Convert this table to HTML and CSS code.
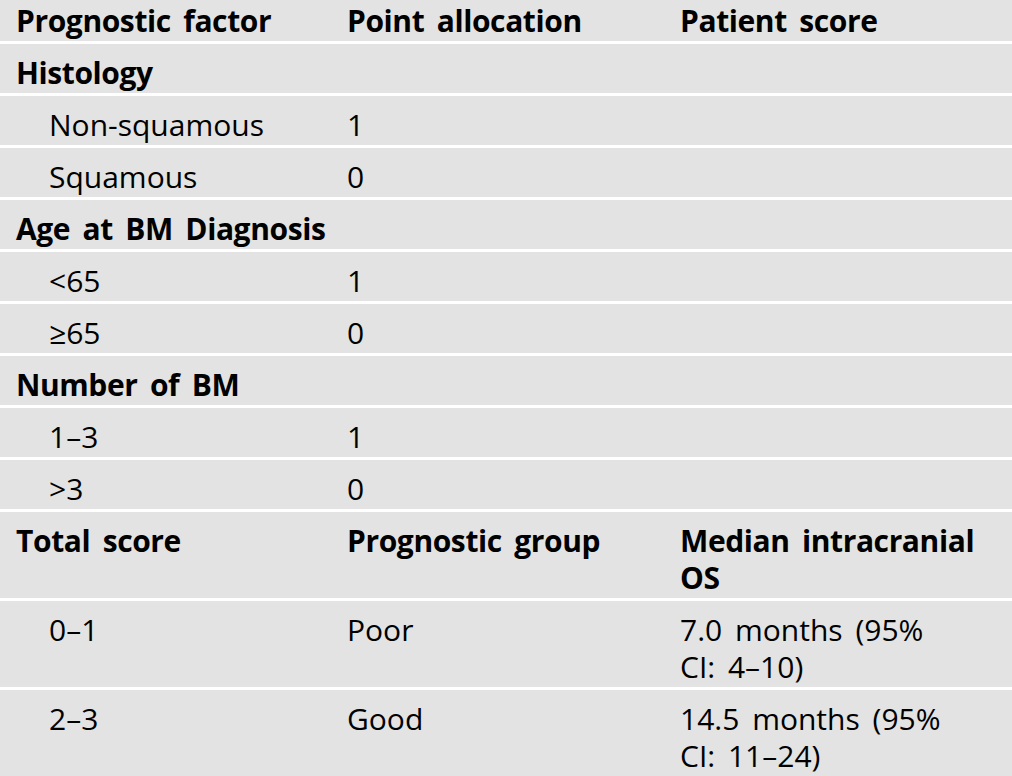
FILE: index.html
```html
<!DOCTYPE html>
<html lang="en">
<head>
<meta charset="utf-8">
<title>Prognostic score</title>
<link rel="stylesheet" href="styles.css">
</head>
<body>
<div class="table">
  <div class="row head">
    <div class="cell">Prognostic factor</div>
    <div class="cell">Point allocation</div>
    <div class="cell">Patient score</div>
  </div>
  <div class="row group">
    <div class="cell">Histology</div>
    <div class="cell"></div>
    <div class="cell"></div>
  </div>
  <div class="row">
    <div class="cell indent">Non-squamous</div>
    <div class="cell">1</div>
    <div class="cell"></div>
  </div>
  <div class="row">
    <div class="cell indent">Squamous</div>
    <div class="cell">0</div>
    <div class="cell"></div>
  </div>
  <div class="row group">
    <div class="cell">Age at BM Diagnosis</div>
    <div class="cell"></div>
    <div class="cell"></div>
  </div>
  <div class="row">
    <div class="cell indent">&lt;65</div>
    <div class="cell">1</div>
    <div class="cell"></div>
  </div>
  <div class="row">
    <div class="cell indent">≥65</div>
    <div class="cell">0</div>
    <div class="cell"></div>
  </div>
  <div class="row group">
    <div class="cell">Number of BM</div>
    <div class="cell"></div>
    <div class="cell"></div>
  </div>
  <div class="row">
    <div class="cell indent">1–3</div>
    <div class="cell">1</div>
    <div class="cell"></div>
  </div>
  <div class="row">
    <div class="cell indent">&gt;3</div>
    <div class="cell">0</div>
    <div class="cell"></div>
  </div>
  <div class="row group">
    <div class="cell">Total score</div>
    <div class="cell">Prognostic group</div>
    <div class="cell">Median intracranial<br>OS</div>
  </div>
  <div class="row">
    <div class="cell indent">0–1</div>
    <div class="cell">Poor</div>
    <div class="cell">7.0 months (95%<br>CI: 4–10)</div>
  </div>
  <div class="row">
    <div class="cell indent">2–3</div>
    <div class="cell">Good</div>
    <div class="cell">14.5 months (95%<br>CI: 11–24)</div>
  </div>
</div>
</body>
</html>
```
FILE: styles.css
```css
html, body {
  margin: 0;
  padding: 0;
  background: #e3e3e3;
}
body {
  font-family: "Open Sans", "Noto Sans", sans-serif;
  font-size: 30px;
  line-height: 37px;
  color: #000;
  word-spacing: 5px;
}
.table {
  display: flex;
  flex-direction: column;
  width: 1012px;
}
.row {
  display: grid;
  grid-template-columns: 331px 333px 1fr;
  border-top: 3px solid #fff;
}
.row.head {
  border-top: none;
}
.row.head,
.row.group {
  font-weight: 700;
  letter-spacing: -0.4px;
  word-spacing: 5px;
}
.row.head .cell {
  padding-top: 2px;
  padding-bottom: 2px;
}
.cell {
  padding: 10px 0 2px 16px;
  white-space: nowrap;
}
.cell.indent {
  padding-left: 49px;
}
```
